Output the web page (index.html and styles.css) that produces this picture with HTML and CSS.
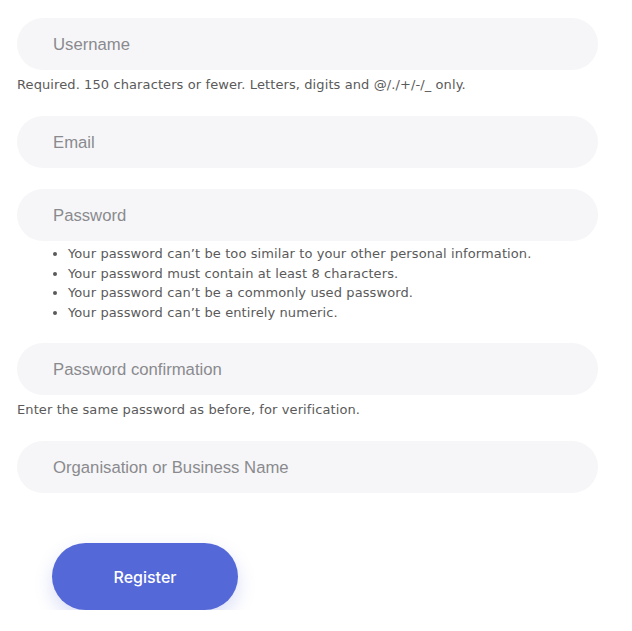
FILE: index.html
```html
<!DOCTYPE html>
<html lang="en">
<head>
<meta charset="utf-8">
<title>Register</title>
<link rel="stylesheet" href="styles.css">
</head>
<body>
<form class="form">
  <div class="field">
    <input class="input" type="text" placeholder="Username">
    <p class="help">Required. 150 characters or fewer. Letters, digits and @/./+/-/_ only.</p>
  </div>
  <div class="field">
    <input class="input" type="email" placeholder="Email">
  </div>
  <div class="field">
    <input class="input" type="password" placeholder="Password">
    <ul class="rules">
      <li>Your password can’t be too similar to your other personal information.</li>
      <li>Your password must contain at least 8 characters.</li>
      <li>Your password can’t be a commonly used password.</li>
      <li>Your password can’t be entirely numeric.</li>
    </ul>
  </div>
  <div class="field">
    <input class="input" type="password" placeholder="Password confirmation">
    <p class="help">Enter the same password as before, for verification.</p>
  </div>
  <div class="field">
    <input class="input" type="text" placeholder="Organisation or Business Name">
  </div>
  <div class="actions">
    <button class="btn" type="submit">Register</button>
  </div>
</form>
</body>
</html>
```

FILE: styles.css
```css
html, body {
  margin: 0;
  padding: 0;
  background: #ffffff;
}
.form {
  width: 581px;
  padding: 18px 0 0 17px;
  display: flex;
  flex-direction: column;
  gap: 21px;
}
.field {
  display: flex;
  flex-direction: column;
}
.input {
  box-sizing: border-box;
  width: 581px;
  height: 52px;
  border: none;
  border-radius: 26px;
  background: #f6f6f8;
  padding: 2px 36px 0;
  font-family: "Liberation Sans", Arial, sans-serif;
  font-size: 16.7px;
  color: #333;
  outline: none;
}
.input::placeholder {
  color: #8a8a8e;
}
.help {
  margin: 5px 0 0 0;
  font-family: "DejaVu Sans", sans-serif;
  font-size: 13px;
  letter-spacing: 0.1px;
  line-height: 20px;
  color: #5a5a5a;
}
.rules {
  margin: 3px 0 0 0;
  padding-left: 51px;
  font-family: "DejaVu Sans", sans-serif;
  font-size: 13px;
  letter-spacing: 0.1px;
  line-height: 19.5px;
  color: #5a5a5a;
}
.actions {
  padding: 29px 0 0 35px;
}
.btn {
  width: 186px;
  height: 67px;
  border: none;
  border-radius: 34px;
  background: #5568d8;
  color: #ffffff;
  font-family: Inter, "Open Sans", sans-serif;
  font-size: 16px;
  font-weight: 500;
  box-shadow: 0 8px 18px rgba(85, 104, 216, 0.22);
}
```
